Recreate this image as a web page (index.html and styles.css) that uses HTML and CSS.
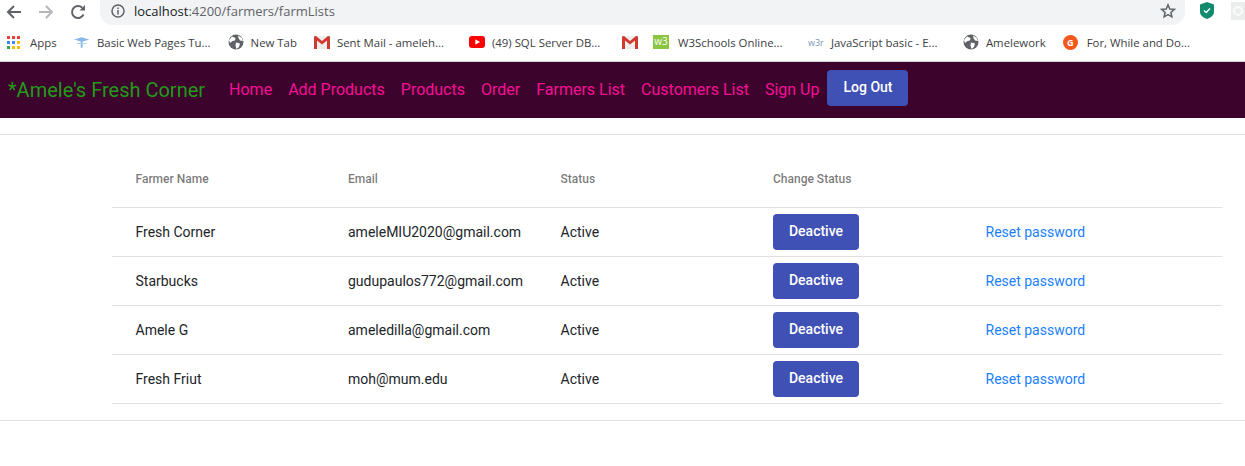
FILE: index.html
```html
<!DOCTYPE html>
<html lang="en">
<head>
    <meta charset="UTF-8">
    <title>Farmers List</title>
    <link rel="stylesheet" href="styles.css">
</head>
<body>
    <svg class="defs" width="0" height="0">
        <symbol id="globe" viewBox="0 0 16 16">
            <circle cx="8" cy="8" r="7.5" fill="#5f6368"/>
            <path d="M4 2.500 7.500 4 7 6.500 4.500 7 2 9 1 6ZM8 8.500 12 9.500 11 13 8.500 15 7.500 11.500ZM10 1.500 14 4 15 7 12 6.500 10.500 4Z" fill="#fff"/>
        </symbol>
        <symbol id="gmail" viewBox="0 0 16 14">
            <path d="M0 1h16v13H0Z" fill="#eee"/>
            <path d="M0 1.500 2 1 8 6 14 1 16 1.500V14H13V5.500L8 9.500 3 5.500V14H0Z" fill="#d1392c"/>
        </symbol>
    </svg>
    <div class="chrome">
        <div class="toolbar">
            <svg class="tool" viewBox="0 0 16 16"><path d="M15 8H2M8 2 2 8l6 6" fill="none" stroke="#5f6368" stroke-width="2"/></svg>
            <svg class="tool" viewBox="0 0 16 16"><path d="M1 8h13M8 2l6 6-6 6" fill="none" stroke="#b4b6b9" stroke-width="2"/></svg>
            <svg class="tool" viewBox="0 0 16 16"><path d="M13.500 10.500A6 6 0 1 1 12.300 3.800" fill="none" stroke="#5f6368" stroke-width="2"/><path d="M9.500 6.500H15V1Z" fill="#5f6368"/></svg>
            <div class="omnibox">
                <svg class="info" viewBox="0 0 14 14"><circle cx="7" cy="7" r="6" fill="none" stroke="#5f6368" stroke-width="1.500"/><path d="M7 6v4.500M7 3.500v1.500" stroke="#5f6368" stroke-width="1.500"/></svg>
                <span class="url"><b>localhost</b>:4200/farmers/farmLists</span>
                <svg class="star" viewBox="0 0 16 16"><path d="M8 1.800 9.800 6l4.500.4-3.400 3 1 4.400L8 11.500l-3.900 2.300 1-4.400-3.400-3L6.200 6Z" fill="none" stroke="#5f6368" stroke-width="1.500"/></svg>
            </div>
            <svg class="shield" viewBox="0 0 14 17"><path d="M7 0 14 2.500V10C14 13.500 10 16 7 17 4 16 0 13.500 0 10V2.500Z" fill="#0f8a6d"/><path d="M4 8.500 6.200 10.500 10 6.500" fill="none" stroke="#fff" stroke-width="1.300"/></svg>
            <svg class="ext" viewBox="0 0 14 18"><path d="M0 0h14v18H0Z" fill="#eceded"/><circle cx="7" cy="9" r="4" fill="none" stroke="#fafafa" stroke-width="2"/></svg>
        </div>
        <div class="bookmarks">
            <span class="mark">
                <span class="apps"><i class="r"></i><i class="r"></i><i class="r"></i><i class="b"></i><i class="b"></i><i class="y"></i><i class="g"></i><i class="y"></i><i class="y"></i></span>
                Apps
            </span>
            <span class="mark basic">
                <svg class="fav" viewBox="0 0 16 16"><path d="M0 5.500 8 3 16 5.500 9 7.500V14H7V7.500Z" fill="#8ab8e8"/><path d="M3 9.500H13" stroke="#a8cdf0"/></svg>
                Basic Web Pages Tu...
            </span>
            <span class="mark"><svg class="fav"><use href="#globe"/></svg>New Tab</span>
            <span class="mark long"><svg class="fav"><use href="#gmail"/></svg>Sent Mail - ameleh...</span>
            <span class="mark long tight">
                <svg class="fav" viewBox="0 0 16 12"><rect width="16" height="12" rx="3" fill="#f00"/><path d="M6.300 3.300 11 6 6.300 8.700Z" fill="#fff"/></svg>
                (49) SQL Server DB...
            </span>
            <span class="mark only-icon"><svg class="fav"><use href="#gmail"/></svg></span>
            <span class="mark long"><span class="w3">w3</span>W3Schools Online...</span>
            <span class="mark long"><span class="w3r">w3r</span>JavaScript basic - E...</span>
            <span class="mark"><svg class="fav"><use href="#globe"/></svg>Amelework</span>
            <span class="mark"><span class="gfav">G</span>For, While and Do...</span>
        </div>
    </div>

    <nav class="navbar">
        <a class="brand" href="#">*Amele's Fresh Corner</a>
        <ul class="nav-links">
            <li><a href="#">Home</a></li>
            <li><a href="#">Add Products</a></li>
            <li><a href="#">Products</a></li>
            <li><a href="#">Order</a></li>
            <li><a href="#">Farmers List</a></li>
            <li><a href="#">Customers List</a></li>
            <li><a href="#">Sign Up</a></li>
        </ul>
        <button class="btn logout">Log Out</button>
    </nav>

    <hr class="rule">

    <table class="farmers">
        <thead>
            <tr>
                <th>Farmer Name</th>
                <th>Email</th>
                <th>Status</th>
                <th>Change Status</th>
                <th></th>
            </tr>
        </thead>
        <tbody>
            <tr>
                <td>Fresh Corner</td>
                <td>ameleMIU2020@gmail.com</td>
                <td>Active</td>
                <td><button class="btn">Deactive</button></td>
                <td><a href="#">Reset password</a></td>
            </tr>
            <tr>
                <td>Starbucks</td>
                <td>gudupaulos772@gmail.com</td>
                <td>Active</td>
                <td><button class="btn">Deactive</button></td>
                <td><a href="#">Reset password</a></td>
            </tr>
            <tr>
                <td>Amele G</td>
                <td>ameledilla@gmail.com</td>
                <td>Active</td>
                <td><button class="btn">Deactive</button></td>
                <td><a href="#">Reset password</a></td>
            </tr>
            <tr>
                <td>Fresh Friut</td>
                <td>moh@mum.edu</td>
                <td>Active</td>
                <td><button class="btn">Deactive</button></td>
                <td><a href="#">Reset password</a></td>
            </tr>
        </tbody>
    </table>

    <hr class="rule">
</body>
</html>
```

FILE: styles.css
```css
*{
    margin: 0;
    padding: 0;
    box-sizing: border-box;
    list-style: none;
}
body{
    font-family: Roboto, "Liberation Sans", sans-serif;
    font-size: 14px;
    color: #212529;
    background: #fff;
    overflow: hidden;
}
.defs{
    display: block;
    height: 0;
}

/* browser bar */
.chrome{
    height: 62px;
    border-bottom: 1px solid #d0d0d0;
    font-family: "Open Sans", "Noto Sans", sans-serif;
    color: #3c4043;
}
.toolbar{
    height: 25px;
    display: flex;
    align-items: center;
    padding-left: 6px;
}
.tool{
    width: 16px;
    height: 16px;
    margin-right: 16px;
    margin-top: -2px;
}
.omnibox{
    width: 1087px;
    height: 25px;
    margin-left: -2px;
    padding: 0 11px 4px;
    display: flex;
    align-items: center;
    background: #f1f3f4;
    border-radius: 0 0 13px 13px;
}
.info{
    width: 14px;
    height: 14px;
    margin-right: 9px;
}
.url{
    flex: 1;
    font-size: 13px;
    color: #5f6368;
}
.url b{
    font-weight: normal;
    color: #202124;
}
.star{
    width: 16px;
    height: 16px;
    margin-right: -2px;
}
.shield{
    width: 14px;
    height: 17px;
    margin-left: 15px;
    margin-top: -4px;
}
.ext{
    width: 14px;
    height: 18px;
    margin-left: 17px;
    margin-top: -4px;
}
.bookmarks{
    height: 36px;
    display: flex;
    align-items: center;
    gap: 17px;
    padding: 0 0 2px 7px;
    font-size: 11.4px;
    white-space: nowrap;
}
.mark{
    display: flex;
    align-items: center;
}
.mark.long{
    width: 138px;
}
.mark.tight{
    width: 136px;
}
.mark.basic{
    width: 137px;
}
.fav{
    width: 16px;
    height: 16px;
    margin-right: 7px;
}
.basic .fav{
    margin-right: 8px;
}
.only-icon{
    margin-right: -2px;
}
.only-icon .fav{
    margin-right: 0;
}
.apps{
    display: grid;
    grid-template-columns: repeat(3, 3px);
    gap: 2px;
    margin-right: 10px;
}
.apps i{
    height: 3px;
}
.apps .r{ background: #ea4335; }
.apps .b{ background: #4285f4; }
.apps .y{ background: #fbbc05; }
.apps .g{ background: #34a853; }
.w3{
    width: 16px;
    height: 14px;
    margin-right: 9px;
    background: #8ac640;
    color: #fff;
    font-size: 10px;
    line-height: 13px;
    text-align: center;
}
.w3r{
    width: 16px;
    margin-right: 7px;
    font-size: 9px;
    color: #7d93b8;
}
.gfav{
    width: 15px;
    height: 15px;
    margin-right: 9px;
    border-radius: 50%;
    background: #f4581c;
    color: #fff;
    font-size: 9px;
    font-weight: bold;
    line-height: 15px;
    text-align: center;
}

/* navbar */
.navbar{
    height: 56px;
    padding-left: 8px;
    display: flex;
    align-items: center;
    background: #3c042c;
}
.brand{
    font-size: 20px;
    color: #229b18;
    text-decoration: none;
    margin-right: 24px;
}
.nav-links{
    display: flex;
    gap: 16px;
    margin-right: 8px;
    padding-bottom: 2px;
}
.nav-links a{
    font-size: 16px;
    color: #f50f96;
    text-decoration: none;
}
.btn{
    width: 86px;
    height: 36px;
    border: 0;
    border-radius: 4px;
    background: #3f51b5;
    color: #fff;
    font-family: Roboto, sans-serif;
    font-size: 14px;
    font-weight: 500;
    padding-bottom: 1px;
}
.logout{
    width: 81px;
    margin-top: -4px;
    padding-bottom: 3px;
}

.rule{
    border: 0;
    border-top: 1px solid #e0e0e0;
    margin-top: 16px;
}

/* table */
.farmers{
    width: 1110px;
    margin: 16px 0 0 112px;
    border-collapse: collapse;
    table-layout: fixed;
}
.farmers th{
    width: 212.5px;
    height: 56px;
    padding-left: 23.5px;
    border-bottom: 1px solid #e0e0e0;
    text-align: left;
    font-size: 12px;
    font-weight: 500;
    color: rgba(0, 0, 0, 0.54);
}
.farmers th:last-child{
    width: 260px;
}
.farmers td{
    height: 49px;
    padding-left: 23.5px;
    border-bottom: 1px solid #e0e0e0;
    vertical-align: middle;
}
.farmers td a{
    color: #1a7fff;
    text-decoration: none;
}
```
